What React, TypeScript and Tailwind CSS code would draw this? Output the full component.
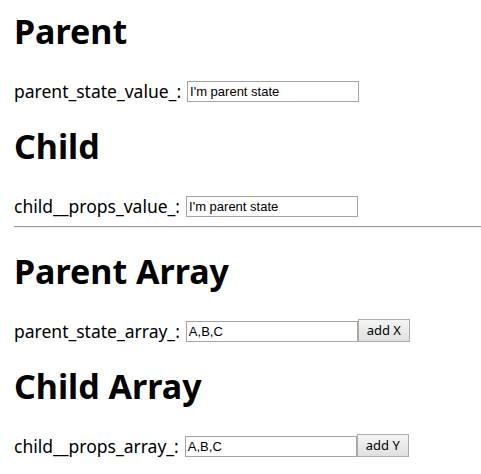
import React from "react";

const Row = ({ label, value, btn }: { label: string; value: string; btn?: string }) => (
  <div className="flex items-end h-[21px]">
    <span className="text-[17.5px] leading-[21px] text-black mr-[6px] self-center" style={{ fontFamily: '"Noto Sans", sans-serif' }}>{label}</span>
    <div className="w-[172px] h-[21px] shrink-0 border border-[#a5a5a5] bg-white flex items-center pl-[2px] text-[13px] text-black" style={{ fontFamily: '"Liberation Sans", Arial, sans-serif' }}>
      {value}
    </div>
    {btn && (
      <div className="w-[52px] h-[23px] shrink-0 border border-[#acacac] bg-gradient-to-b from-[#f4f4f4] to-[#e0e0e0] flex items-center justify-center text-[13px] text-black" style={{ fontFamily: '"Noto Sans", sans-serif' }}>
        {btn}
      </div>
    )}
  </div>
);

const H = ({ children }: { children: React.ReactNode }) => (
  <div className="text-[34px] font-bold leading-[48px] h-[48px] text-black whitespace-nowrap" style={{ fontFamily: '"Noto Sans", sans-serif' }}>
    {children}
  </div>
);

export default function App() {
  return (
    <div className="w-[481px] h-[474px] bg-white overflow-hidden pl-[14px]">
      <div className="pt-[7px]"><H>Parent</H></div>
      <div className="mt-[26px]"><Row label="parent_state_value_:" value="I'm parent state" /></div>
      <div className="mt-[20px]"><H>Child</H></div>
      <div className="mt-[26px]"><Row label="child__props_value_:" value="I'm parent state" /></div>
      <div className="mt-[9px] h-[2px] border-t border-[#9a9a9a] border-b border-b-[#eeeeee]" />
      <div className="mt-[19px]"><H>Parent Array</H></div>
      <div className="mt-[26px]"><Row label="parent_state_array_:" value="A,B,C" btn="add X" /></div>
      <div className="mt-[20px]"><H>Child Array</H></div>
      <div className="mt-[26px]"><Row label="child__props_array_:" value="A,B,C" btn="add Y" /></div>
    </div>
  );
}
